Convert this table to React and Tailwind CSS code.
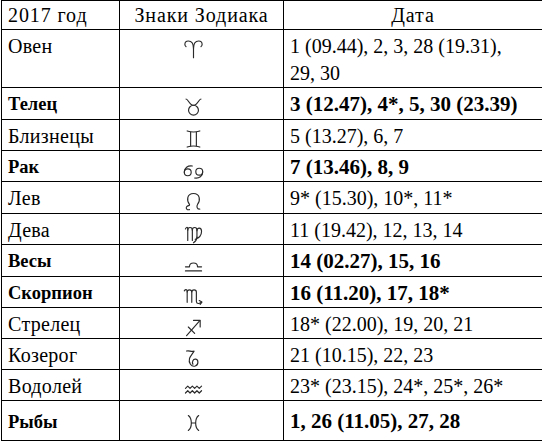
const signs = {
  aries: (
    <>
      <path d="M10 17 V9 C10 4.5 8 2.5 5.5 2.5 C3.5 2.5 2.5 4 2.5 5.5 C2.5 6.5 3 7 3.5 7.5" />
      <path d="M10 9 C10 4.5 12 2.5 14.5 2.5 C16.5 2.5 17.5 4 17.5 5.5 C17.5 6.5 17 7 16.5 7.5" />
    </>
  ),
  taurus: (
    <>
      <circle cx="10" cy="12.3" r="4.3" />
      <path d="M3.5 2.5 C5.5 2.5 6 8 10 8 C14 8 14.5 2.5 16.5 2.5" />
    </>
  ),
  gemini: (
    <>
      <path d="M4.5 2.5 Q10 4.3 15.5 2.5" />
      <path d="M4.5 16.5 Q10 14.7 15.5 16.5" />
      <path d="M7.5 3.5 V15.5 M12.5 3.5 V15.5" />
    </>
  ),
  cancer: (
    <>
      <circle cx="5" cy="11.5" r="3" />
      <path d="M2 11.5 C2 7.5 5 5.5 9 6" />
      <circle cx="15" cy="11" r="3" />
      <path d="M18 11 C18 15 15 17 11 16.5" />
    </>
  ),
  leo: (
    <>
      <path d="M6.5 17 C4.5 17.5 3 16 4 14.5 C5 13.2 7 13.8 6.5 12.5 C4 9.5 4 3 10 3 C16 3 16 9.5 13.5 12.5 C12.5 14 13 17 15.5 16.5" />
    </>
  ),
  virgo: (
    <>
      <path d="M3 6 C4 4 5 4 5 6 V16" />
      <path d="M5 7 C5 4 9 4 9 7 V16" />
      <path d="M9 7 C9 4 13 4 13 7 V13" />
      <path d="M13 7.5 C13 4.5 17 4.5 17 8 C17 12 14.5 14 11.5 15 M13 13 C13 15 11.5 17 10 18" />
    </>
  ),
  libra: (
    <>
      <path d="M3 15.5 H17" />
      <path d="M3 12 H6.5 C6.5 7.5 13.5 7.5 13.5 12 H17" />
    </>
  ),
  scorpio: (
    <>
      <path d="M2 5 C3 3.5 4.5 3.5 4.5 5.5 V15" />
      <path d="M4.5 6 C4.5 3.5 8.5 3.5 8.5 6 V15" />
      <path d="M8.5 6 C8.5 3.5 12.5 3.5 12.5 6 V14 C12.5 16.5 15 16.5 17 15" />
      <path d="M15 13.5 L17.3 14.8 L15.8 16.8" />
    </>
  ),
  sagittarius: (
    <>
      <path d="M4 17 L15.5 4" />
      <path d="M10 3.8 H15.8 V9.5" />
      <path d="M5.5 9.5 L11 15" />
    </>
  ),
  capricorn: (
    <>
      <path d="M4 3.5 C6 2.5 8 4.5 10.5 3.5 C9 6 7 8 6.5 10 C5.5 13.5 8 17.5 11.5 16.5 C14.5 15.5 14.5 11 12 10.5 C9.5 10 8.5 13 9.5 15" />
    </>
  ),
  aquarius: (
    <>
      <path d="M3 9 L5 7 L7 9 L9 7 L11 9 L13 7 L15 9 L17 7" />
      <path d="M3 13 L5 11 L7 13 L9 11 L11 13 L13 11 L15 13 L17 11" />
    </>
  ),
  pisces: (
    <>
      <path d="M5.5 3 C9 5.5 9 13.5 5.5 16" />
      <path d="M14.5 3 C11 5.5 11 13.5 14.5 16" />
      <path d="M8.3 9.5 H11.7" />
    </>
  ),
};

const rows = [
  { name: "Овен", sign: "aries", date: ["1 (09.44), 2, 3, 28 (19.31),", "29, 30"], h: "h-[58px]" },
  { name: "Телец", sign: "taurus", date: ["3 (12.47), 4*, 5, 30 (23.39)"], bold: true, h: "h-[32px]" },
  { name: "Близнецы", sign: "gemini", date: ["5 (13.27), 6, 7"], h: "h-[31px]" },
  { name: "Рак", sign: "cancer", date: ["7 (13.46), 8, 9"], bold: true, h: "h-[31px]" },
  { name: "Лев", sign: "leo", date: ["9* (15.30), 10*, 11*"], h: "h-[32px]" },
  { name: "Дева", sign: "virgo", date: ["11 (19.42), 12, 13, 14"], h: "h-[31px]" },
  { name: "Весы", sign: "libra", date: ["14 (02.27), 15, 16"], bold: true, h: "h-[32px]" },
  { name: "Скорпион", sign: "scorpio", date: ["16 (11.20), 17, 18*"], bold: true, h: "h-[31px]" },
  { name: "Стрелец", sign: "sagittarius", date: ["18* (22.00), 19, 20, 21"], h: "h-[31px]" },
  { name: "Козерог", sign: "capricorn", date: ["21 (10.15), 22, 23"], h: "h-[31px]" },
  { name: "Водолей", sign: "aquarius", date: ["23* (23.15), 24*, 25*, 26*"], h: "h-[31px]" },
  { name: "Рыбы", sign: "pisces", date: ["1, 26 (11.05), 27, 28"], bold: true, h: "h-[40px]", last: true },
];

function Sign({ name }) {
  return (
    <svg
      width="23"
      height="22"
      viewBox="0 0 20 19"
      fill="none"
      stroke="#2a2a2a"
      strokeWidth="1"
      strokeLinecap="round"
      strokeLinejoin="round"
      className="block"
    >
      {signs[name]}
    </svg>
  );
}

export default function App() {
  return (
    <div className="bg-white w-[542px] h-[441px] pl-px">
      <table
        className="table-fixed border-collapse w-[541px] text-[20px] leading-[27px] text-black"
        style={{ fontFamily: '"Liberation Serif", "Times New Roman", serif' }}
      >
        <colgroup>
          <col className="w-[118px]" />
          <col className="w-[164px]" />
          <col className="w-[259px]" />
        </colgroup>
        <thead>
          <tr className="h-[29px] tracking-[0.9px]">
            <th className="border border-black font-normal text-left pl-[6px] pr-0 align-bottom">2017 год</th>
            <th className="border border-black font-normal text-center align-bottom">Знаки Зодиака</th>
            <th className="border border-black font-normal text-center align-bottom">Дата</th>
          </tr>
        </thead>
        <tbody>
          {rows.map((r) => (
            <tr key={r.name} className={r.h}>
              <td
                className={`border border-black pl-[6px] pr-0 align-top ${r.last ? "pt-[8px]" : "pt-[3px]"} ${
                  r.bold ? "font-bold text-[18.5px]" : "tracking-[0.3px]"
                }`}
              >
                {r.name}
              </td>
              <td className={`border border-black align-top pl-[62px] ${r.last ? "pt-[11px]" : "pt-[8px]"}`}>
                <Sign name={r.sign} />
              </td>
              <td
                className={`border border-black pl-[6px] pr-0 align-top whitespace-nowrap ${
                  r.last ? "pt-[7px]" : "pt-[3px]"
                } ${r.bold ? "font-bold text-[21px]" : ""}`}
              >
                {r.date.map((line) => (
                  <div key={line}>{line}</div>
                ))}
              </td>
            </tr>
          ))}
        </tbody>
      </table>
    </div>
  );
}
